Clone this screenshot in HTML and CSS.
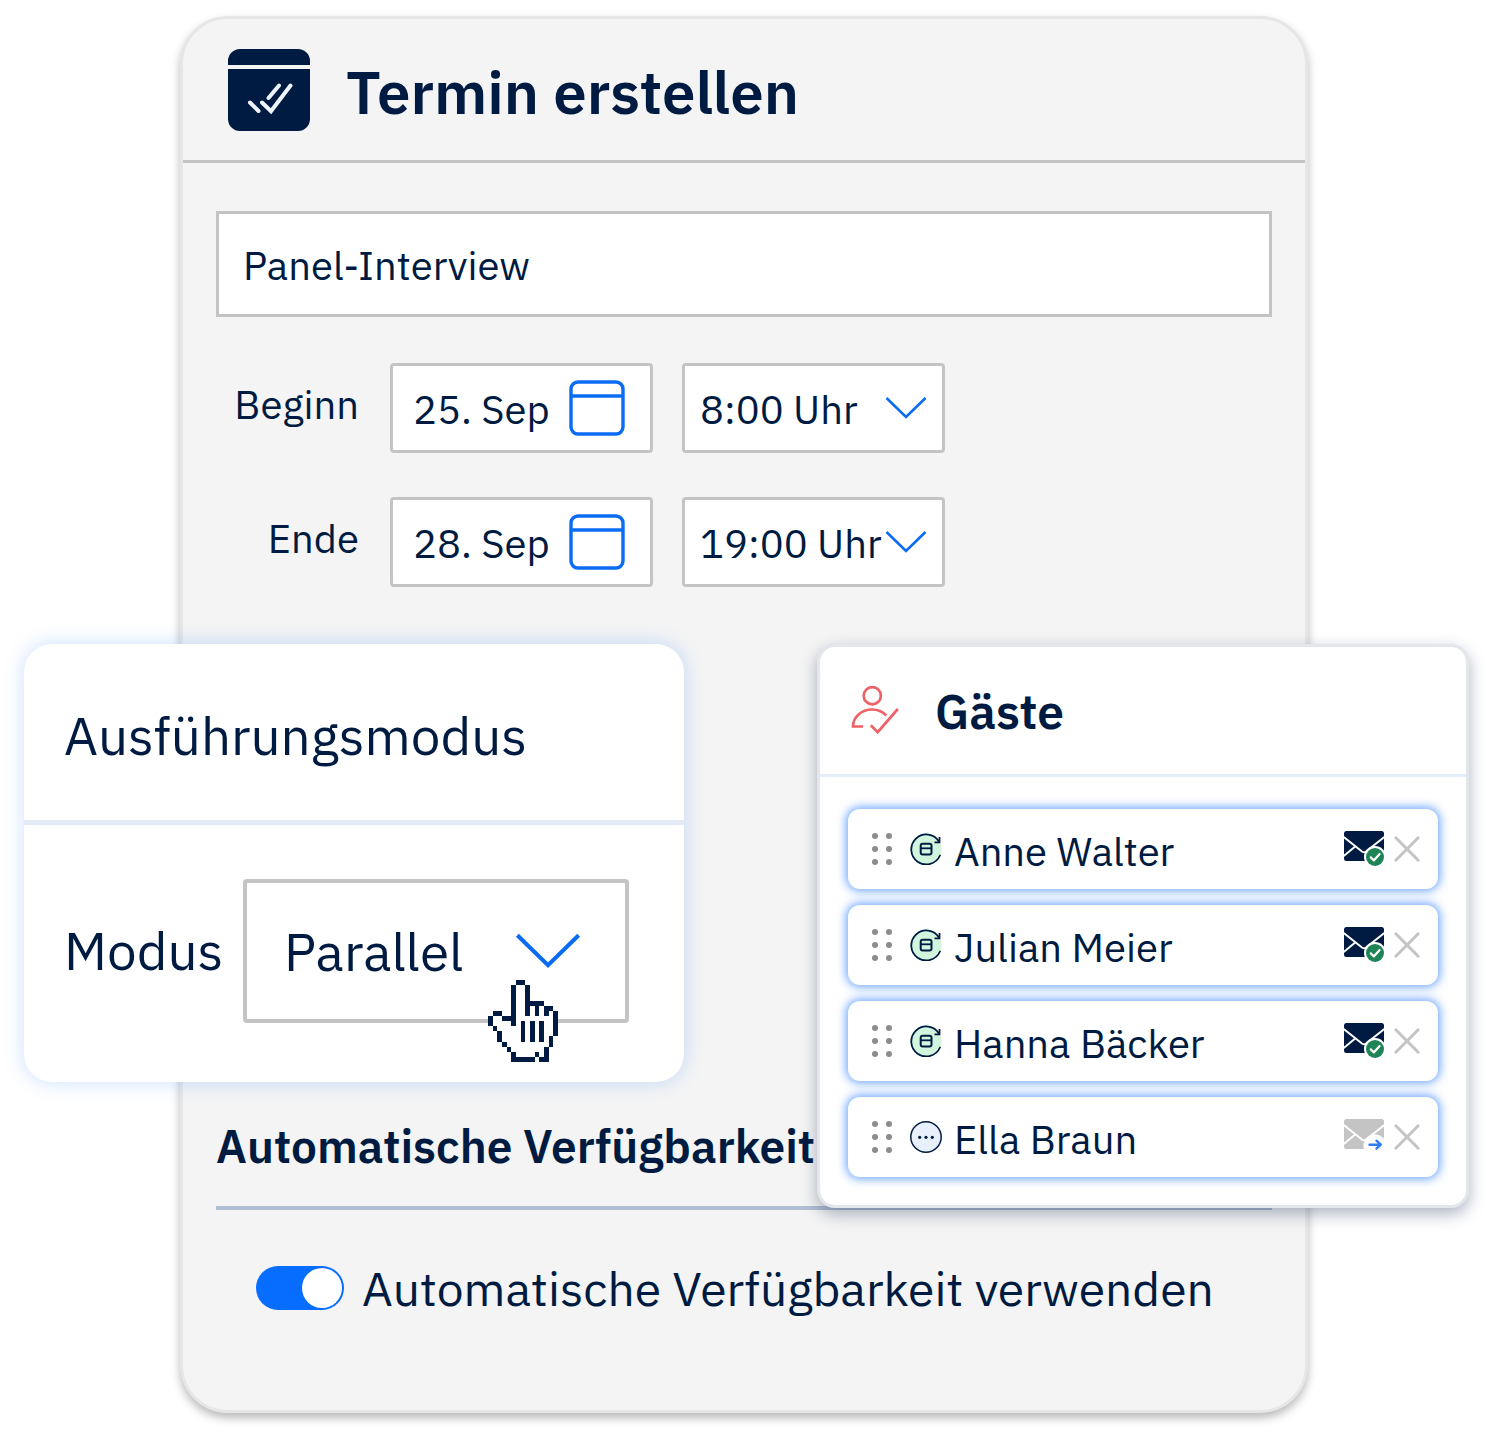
FILE: index.html
```html
<!DOCTYPE html>
<html lang="de">
<head>
<meta charset="utf-8">
<meta name="viewport" content="width=device-width, initial-scale=1">
<title>Termin erstellen</title>
<link rel="stylesheet" href="styles.css">
</head>
<body>
<svg class="sprite" aria-hidden="true">
  <symbol id="calendar" viewBox="0 0 56 56"><g fill="none" stroke="#0a6cf5" stroke-width="3.400"><rect x="2" y="2" width="52" height="52" rx="7"/><path d="M2 16h52"/></g></symbol>
  <symbol id="chevron" viewBox="0 0 42 24"><path d="M1.500 2 21 21 40.500 2" fill="none" stroke="#0a6cf5" stroke-width="2.600"/></symbol>
  <symbol id="grip" viewBox="0 0 20 32"><g fill="#8c8c8c"><circle cx="3" cy="3" r="3"/><circle cx="17" cy="3" r="3"/><circle cx="3" cy="16" r="3"/><circle cx="17" cy="16" r="3"/><circle cx="3" cy="29" r="3"/><circle cx="17" cy="29" r="3"/></g></symbol>
  <symbol id="synced" viewBox="0 0 32 32"><circle cx="16" cy="16" r="15.500" fill="#d2f5de"/><g fill="none" stroke="#001b41" stroke-width="1.800"><path d="M30 22.500A15 15 0 1 1 29 8.500" stroke-linecap="round"/><path d="M29.500 4v5.300H24.500"/><rect x="10.700" y="10.700" width="10.800" height="10.800" rx="2" stroke-width="2"/><path d="M10.700 15.300h10.800"/></g></symbol>
  <symbol id="pending" viewBox="0 0 32 32"><circle cx="16" cy="16" r="15.200" fill="#e8f0fd" stroke="#001b41" stroke-width="1.500"/><g fill="#001b41"><circle cx="9.700" cy="16.300" r="1.600"/><circle cx="16" cy="16.300" r="1.600"/><circle cx="22.300" cy="16.300" r="1.600"/></g></symbol>
  <symbol id="envelope" viewBox="0 0 42 36"><rect width="40" height="30" rx="2.500" fill="currentColor"/><path d="M-1 5.500 18 20.500Q20 22 22 20.500L41 5.500M-1 25.500 11.500 15.300M41 25.500 28.500 15.300" fill="none" stroke="#fff" stroke-width="2"/></symbol>
  <symbol id="cross" viewBox="0 0 26 26"><path d="M1 1 25 25M25 1 1 25" stroke="#c4c4c4" stroke-width="3" fill="none"/></symbol>
  <symbol id="mail-ok" viewBox="0 0 42 36"><use href="#envelope" width="42" height="36"/><circle cx="31" cy="26" r="11" fill="#fff"/><circle cx="31" cy="26" r="9" fill="#1f8558"/><path d="M26.800 26.400 29.800 29.400 35.600 23" fill="none" stroke="#fff" stroke-width="2.200" stroke-linecap="round" stroke-linejoin="round"/></symbol>
  <symbol id="mail-send" viewBox="0 0 42 36"><use href="#envelope" width="42" height="36"/><circle cx="31" cy="27" r="11.500" fill="#fff"/><path d="M25.500 25.700H36.500M32.500 21.700 36.800 25.700 32.500 29.700" fill="none" stroke="#2d7df6" stroke-width="2.400" stroke-linecap="round" stroke-linejoin="round"/></symbol>
</svg>

<main class="stage">
  <form class="card">
    <header class="card-head">
      <svg class="logo" viewBox="0 0 82 82" aria-hidden="true">
        <path d="M0 16V12A12 12 0 0 1 12 0H70A12 12 0 0 1 82 12V16ZM0 20H82V70A12 12 0 0 1 70 82H12A12 12 0 0 1 0 70Z" fill="#001b41"/>
        <path d="M22 53.500 30.500 62M51 36.500 40.500 49M34 53.500 43 62.300 62.500 36.500" fill="none" stroke="#eef4fd" stroke-width="4" stroke-linecap="round" stroke-linejoin="miter"/>
      </svg>
      <h1>Termin erstellen</h1>
    </header>

    <div class="card-body">
      <input class="box title-input" type="text" value="Panel-Interview" aria-label="Titel">

      <div class="times">
        <label for="start-date">Beginn</label>
        <div class="box field">
          <input id="start-date" type="text" value="25. Sep">
          <svg class="icon-calendar" aria-hidden="true"><use href="#calendar"/></svg>
        </div>
        <div class="box field select-field">
          <select aria-label="Beginn Uhrzeit"><option>8:00 Uhr</option></select>
          <svg class="icon-chevron" aria-hidden="true"><use href="#chevron"/></svg>
        </div>

        <label for="end-date">Ende</label>
        <div class="box field">
          <input id="end-date" type="text" value="28. Sep">
          <svg class="icon-calendar" aria-hidden="true"><use href="#calendar"/></svg>
        </div>
        <div class="box field select-field">
          <select aria-label="Ende Uhrzeit"><option>19:00 Uhr</option></select>
          <svg class="icon-chevron" aria-hidden="true"><use href="#chevron"/></svg>
        </div>
      </div>

      <section class="availability">
        <h2>Automatische Verfügbarkeit</h2>
        <label class="switch-row">
          <input class="switch" type="checkbox" role="switch" checked>
          Automatische Verfügbarkeit verwenden
        </label>
      </section>
    </div>
  </form>

  <section class="mode">
    <h2>Ausführungsmodus</h2>
    <div class="mode-body">
      <label for="mode">Modus</label>
      <div class="box field mode-field">
        <select id="mode"><option>Parallel</option></select>
        <svg class="icon-chevron" aria-hidden="true"><use href="#chevron"/></svg>
      </div>
    </div>
    <svg class="pointer" viewBox="0 0 15 16" preserveAspectRatio="none" shape-rendering="crispEdges" aria-hidden="true">
      <path fill="#fff" d="M6 0h2v1h1v3h3v1h2v1h1v5h-1v2h-1v3H5v-2H4v-1H3v-1H2v-2H1V9H0V7h1V6h2v1h2V1h1z"/>
      <path fill="#001b41" d="M6 0h2v1h-2zM5 1h1v8h-1v-1h-2v-1h2zM8 1h1v3h3v1h2v1h1v5h-1v2h-1v3h-2v-1h1v-2h1v-2h1v-5h-1v1h-1v-2h-1v2h-1v-2h-1v2h-1zM1 6h2v1h-2zM0 7h1v2h-1zM1 9h1v1h-1zM2 10h1v2h-1zM3 12h1v1h-1zM4 13h1v1h-1zM5 14h1v1h4v1h-5zM10 14h1v1h-1zM7 8h1v4h-1zM9 8h1v4h-1zM11 8h1v4h-1z"/>
    </svg>
  </section>

  <section class="guests">
    <header class="guests-head">
      <svg class="icon-guest" viewBox="0 0 48 48" fill="none" stroke="#ee6267" stroke-width="2.700" aria-hidden="true"><circle cx="21.300" cy="9.700" r="8.600"/><path d="M12 40.500H2C2 31 10.500 23.500 21 23.500C27 23.500 32 26 35.300 29.500M19.800 39.300 26.700 46.200 46.800 23"/></svg>
      <h2>Gäste</h2>
    </header>
    <ul>
      <li>
        <svg class="icon-grip" aria-hidden="true"><use href="#grip"/></svg>
        <svg class="icon-status" aria-hidden="true"><use href="#synced"/></svg>
        <span class="name">Anne Walter</span>
        <svg class="icon-mail" aria-hidden="true"><use href="#mail-ok"/></svg>
        <button type="button" aria-label="Anne Walter entfernen"><svg aria-hidden="true"><use href="#cross"/></svg></button>
      </li>
      <li>
        <svg class="icon-grip" aria-hidden="true"><use href="#grip"/></svg>
        <svg class="icon-status" aria-hidden="true"><use href="#synced"/></svg>
        <span class="name">Julian Meier</span>
        <svg class="icon-mail" aria-hidden="true"><use href="#mail-ok"/></svg>
        <button type="button" aria-label="Julian Meier entfernen"><svg aria-hidden="true"><use href="#cross"/></svg></button>
      </li>
      <li>
        <svg class="icon-grip" aria-hidden="true"><use href="#grip"/></svg>
        <svg class="icon-status" aria-hidden="true"><use href="#synced"/></svg>
        <span class="name">Hanna Bäcker</span>
        <svg class="icon-mail" aria-hidden="true"><use href="#mail-ok"/></svg>
        <button type="button" aria-label="Hanna Bäcker entfernen"><svg aria-hidden="true"><use href="#cross"/></svg></button>
      </li>
      <li>
        <svg class="icon-grip" aria-hidden="true"><use href="#grip"/></svg>
        <svg class="icon-status" aria-hidden="true"><use href="#pending"/></svg>
        <span class="name">Ella Braun</span>
        <svg class="icon-mail muted" aria-hidden="true"><use href="#mail-send"/></svg>
        <button type="button" aria-label="Ella Braun entfernen"><svg aria-hidden="true"><use href="#cross"/></svg></button>
      </li>
    </ul>
  </section>
</main>
</body>
</html>
```
FILE: styles.css
```css
*, *::before { box-sizing: border-box; }

body {
  margin: 0;
  background: #fff;
  color: #001b41;
  font: 40px/48px "IBM Plex Sans", "Noto Sans", sans-serif;
}

h1, h2, ul { margin: 0; padding: 0; }
h1, h2 { font-weight: 600; }

input, select, button {
  margin: 0;
  padding: 0;
  border: 0;
  background: none;
  color: inherit;
  font: inherit;
}

select { appearance: none; }
svg { display: block; flex: none; }
.sprite { position: absolute; width: 0; height: 0; }

.stage {
  position: relative;
  padding: 16px 178px 26px 180px;
}

/* main form */
.card {
  border: 3px solid #e5e6e7;
  border-radius: 48px;
  background: #f4f4f4;
  box-shadow: 0 5px 10px rgba(0, 0, 0, .28);
}

.card-head {
  display: flex;
  align-items: center;
  gap: 36px;
  padding: 30px 45px 29px;
  border-bottom: 3px solid #c4c4c4;
}

.logo { width: 82px; height: 82px; }
h1 { padding-top: 4px; font-size: 60px; line-height: 72px; }

.card-body { padding: 48px 33px 92px; }

.box {
  border: 3px solid #c4c4c4;
  background: #fff;
}

.title-input {
  display: block;
  width: 100%;
  height: 106px;
  padding: 2px 24px 0;
}

.times {
  display: grid;
  grid-template-columns: 145px 263px 263px;
  align-items: center;
  column-gap: 29px;
  row-gap: 44px;
  margin-top: 46px;
}

.times label { padding: 0 2px 8px 0; text-align: right; }

.field {
  display: flex;
  align-items: center;
  height: 90px;
  border-radius: 4px;
}

.field input, .field select { flex: 1; min-width: 0; padding-top: 2px; }
.times .field { padding: 0 25px 0 20px; }
.times .select-field { padding: 0 15px; }
.icon-calendar { width: 56px; height: 56px; }
.icon-chevron { width: 42px; height: 24px; }

.availability { margin-top: 527px; }

.availability h2 {
  padding: 2px 0 30px;
  border-bottom: 4px solid #b0bfd3;
  font-size: 46px;
  line-height: 60px;
}

.switch-row {
  display: flex;
  align-items: center;
  gap: 18px;
  margin-top: 48px;
  padding-left: 40px;
  font-size: 48px;
  line-height: 60px;
}

.switch {
  appearance: none;
  flex: none;
  width: 88px;
  height: 44px;
  padding: 2px;
  border-radius: 22px;
  background: #066dff;
}

.switch::before {
  content: "";
  display: block;
  width: 40px;
  height: 40px;
  border-radius: 50%;
  background: #fff;
}

.switch:checked::before { margin-left: auto; }

/* floating panel: execution mode */
.mode {
  position: absolute;
  top: 644px;
  left: 24px;
  width: 660px;
  border-radius: 28px;
  background: #fff;
  box-shadow: 0 0 20px rgba(50, 130, 255, .25);
  font-size: 53px;
  line-height: 72px;
}

.mode h2 {
  padding: 56px 40px 48px;
  border-bottom: 5px solid #e4ebf6;
  font-size: 53px;
  font-weight: 400;
}

.mode-body {
  display: flex;
  align-items: center;
  justify-content: space-between;
  padding: 54px 55px 59px 40px;
}

.mode-field {
  width: 386px;
  height: 144px;
  padding: 0 44px 0 37px;
  border-width: 4px;
}

.mode .icon-chevron { width: 66px; height: 38px; }

.pointer {
  position: absolute;
  top: 336px;
  left: 464px;
  width: 70px;
  height: 82px;
}

/* floating panel: guests */
.guests {
  position: absolute;
  top: 644px;
  right: 17px;
  width: 652px;
  border: 3px solid #e3e6ea;
  border-radius: 18px;
  background: #fff;
  box-shadow: 0 6px 16px rgba(20, 40, 80, .35);
}

.guests-head {
  display: flex;
  align-items: center;
  gap: 36px;
  padding: 32px 31px 33px;
  border-bottom: 3px solid #e6edfa;
}

.guests-head h2 { padding-top: 2px; font-size: 48px; line-height: 60px; }
.icon-guest { width: 48px; height: 48px; }

.guests ul {
  display: grid;
  gap: 16px;
  padding: 32px 28px 28px;
  list-style: none;
}

.guests li {
  display: flex;
  align-items: center;
  height: 80px;
  padding: 0 18px 0 24px;
  border-radius: 12px;
  background: #fff;
  box-shadow: 0 0 10px 2px rgba(30, 120, 255, .65);
}

.icon-grip { width: 20px; height: 32px; margin-right: 18px; }
.icon-status { width: 32px; height: 32px; margin-right: 12px; }
.name { flex: 1; padding-top: 4px; }
.icon-mail { width: 42px; height: 36px; margin-right: 8px; }
.muted { color: #c4c4c4; }
.guests button, .guests button svg { display: block; width: 26px; height: 26px; }
```
